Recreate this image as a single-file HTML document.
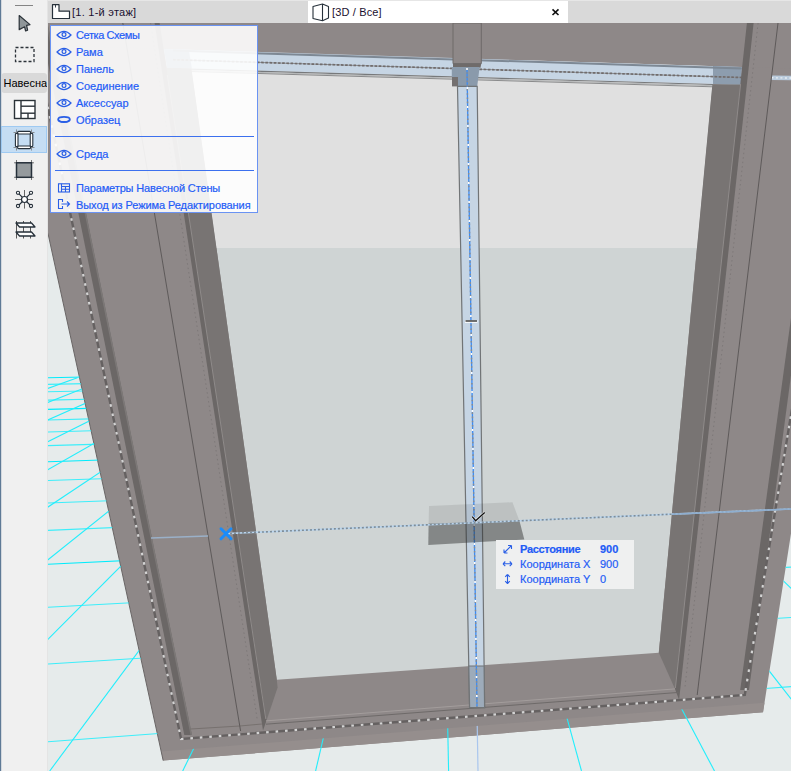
<!DOCTYPE html>
<html><head><meta charset="utf-8">
<style>
html,body{margin:0;padding:0;width:791px;height:771px;overflow:hidden;background:#f0f0f0;}
body{position:relative;font-family:"Liberation Sans",sans-serif;}
svg{position:absolute;left:0;top:0;}
.tab{position:absolute;font-size:11px;color:#1a1030;line-height:13px;white-space:nowrap;}
.menu{position:absolute;left:50px;top:25px;width:208px;height:188px;box-sizing:border-box;border:1px solid #6a93f3;background:rgba(255,255,255,0.89);}
.mi{position:absolute;left:25px;font-size:11px;color:#1f5cf6;-webkit-text-stroke:0.2px #1f5cf6;white-space:nowrap;line-height:13px;}
.sep{position:absolute;left:4px;width:199px;height:1px;background:#3c70ee;}
.tip{position:absolute;left:496px;top:540px;width:138px;height:49px;background:#eff0f0;}
.tr{position:absolute;font-size:11px;color:#1f5cf6;-webkit-text-stroke:0.2px #1f5cf6;white-space:nowrap;line-height:13px;}
</style></head><body>
<svg width="791" height="771" viewBox="0 0 791 771">
<rect x="48" y="23" width="743" height="748" fill="#e6ebeb"/>
<polygon points="48.0,23.0 791.0,23.0 791.0,533.4 763.0,712.3 163.2,760.6 48.0,233.5" fill="#8e8888"/>
<polygon points="161.2,751.5 764.5,702.7 763.0,712.3 163.2,760.6" fill="#958e8d"/>
<polygon points="190.2,60.0 714.7,60.0 658.8,652.8 276.8,679.8" fill="#cfd4d4"/>
<polygon points="190.2,60.0 714.7,60.0 697.0,248.0 216.4,248.0" fill="#e0e0e0"/>
<polygon points="48.0,23.0 791.0,23.0 791.0,68.6 48.0,45.3" fill="#8e8888"/>
<polygon points="163.8,48.9 741.8,67.0 740.8,84.7 167.1,67.9" fill="#c6d5e4"/>
<polygon points="163.8,48.9 188.8,49.7 191.9,68.6 167.1,67.9" fill="#8d9dae"/>
<polygon points="713.0,66.1 741.8,67.0 740.8,84.7 713.0,83.9" fill="#8d9dae"/>
<line x1="173" y1="50.6" x2="741.8" y2="68.4" stroke="#7d8894" stroke-width="2"/>
<line x1="173" y1="68.7" x2="712.9" y2="84.5" stroke="#77797b" stroke-width="1.2"/>
<line x1="173" y1="69.9" x2="712.9" y2="85.7" stroke="#b4b6b7" stroke-width="1"/>
<line x1="173" y1="71.0" x2="712.9" y2="86.8" stroke="#8a8b8c" stroke-width="1"/>
<line x1="173" y1="59.7" x2="741.8" y2="77.5" stroke="#8d9196" stroke-width="1"/>
<line x1="173" y1="59.7" x2="741.8" y2="77.5" stroke="#716c6c" stroke-width="1.7" stroke-dasharray="2.6 1.6"/>
<polygon points="771.7,75.5 791.0,75.8 791.0,80.2 771.2,80.0" fill="#b9cadb"/>
<line x1="771.4" y1="77.8" x2="791" y2="78" stroke="#e8eef4" stroke-width="1.4" stroke-dasharray="2 2.5"/>
<polygon points="166.5,68.0 191.4,68.7 276.8,679.8 277.6,687.4 266.7,720.0" fill="#787473"/>
<polygon points="154.6,23.0 159.6,23.0 266.7,720.0 263.0,730.6" fill="#6b6766"/>
<polygon points="712.4,84.5 740.3,84.5 675.0,689.0 658.8,652.8" fill="#787473"/>
<polygon points="746.9,23.0 753.6,23.0 679.1,700.0 675.0,689.0" fill="#6b6766"/>
<line x1="167.3" y1="75" x2="265.8" y2="719" stroke="#8f8b8a" stroke-width="1"/>
<line x1="740.6" y1="84" x2="675.4" y2="688" stroke="#8f8b8a" stroke-width="1"/>
<polygon points="39.8,23.0 47.4,23.0 191.9,735.0 184.3,735.0" fill="#6b6766"/>
<polygon points="800.3,250.0 807.7,250.0 749.0,690.0 740.2,690.0" fill="#6b6766"/>
<polyline points="48.0,233.5 163.2,760.6" fill="none" stroke="#6a6666" stroke-width="1"/>
<polyline points="46.8,23.0 191.3,735.0" fill="none" stroke="#7c7877" stroke-width="1.5"/>
<polyline points="190.7,729.0 239.8,726.0 261.9,724.0" fill="none" stroke="#77716f" stroke-width="1"/>
<line x1="758.1" y1="23" x2="684.9" y2="688" stroke="#7d7878" stroke-width="1" stroke-dasharray="1.5 3"/>
<line x1="150.6" y1="23" x2="257.3" y2="720" stroke="#7d7878" stroke-width="1" stroke-dasharray="1.5 3"/>
<line x1="122.8" y1="23" x2="240.6" y2="731" stroke="#5e5a5a" stroke-width="1"/>
<line x1="778.0" y1="23" x2="697.2" y2="695" stroke="#5e5a5a" stroke-width="1"/>
<line x1="266" y1="720.9" x2="675" y2="688.9" stroke="#a39d9c" stroke-width="1"/>
<line x1="266" y1="724.2" x2="680" y2="692.3" stroke="#6e6a69" stroke-width="1"/>
<polyline points="30.1,23.0 181.1,739.0 744.8,695.0 805.0,330.0" fill="none" stroke="#656161" stroke-width="2.4"/>
<polyline points="30.1,23.0 181.1,739.0 744.8,695.0 805.0,330.0" fill="none" stroke="#d4d4d4" stroke-width="2.2" stroke-dasharray="2.6 6.9"/>
<clipPath id="gclip"><polygon points="48.0,233.5 163.2,760.6 763.0,712.3 791.0,533.4 791.0,771.0 48.0,771.0"/><polygon points="161.2,751.5 764.5,702.7 763.0,712.3 163.2,760.6"/></clipPath>
<g clip-path="url(#gclip)"><line x1="47" y1="377.7" x2="791" y2="363.2" stroke="#00ecfc" stroke-width="1.1"/><line x1="47" y1="384.4" x2="791" y2="369.2" stroke="#3ceefa" stroke-width="1.1"/><line x1="47" y1="391.8" x2="791" y2="375.8" stroke="#3ceefa" stroke-width="1.1"/><line x1="47" y1="400.1" x2="791" y2="383.1" stroke="#3ceefa" stroke-width="1.1"/><line x1="47" y1="409.4" x2="791" y2="391.4" stroke="#00ecfc" stroke-width="1.1"/><line x1="47" y1="420.0" x2="791" y2="400.7" stroke="#3ceefa" stroke-width="1.1"/><line x1="47" y1="432.0" x2="791" y2="411.4" stroke="#3ceefa" stroke-width="1.1"/><line x1="47" y1="445.7" x2="791" y2="423.6" stroke="#3ceefa" stroke-width="1.1"/><line x1="47" y1="461.8" x2="791" y2="437.9" stroke="#00ecfc" stroke-width="1.1"/><line x1="47" y1="480.6" x2="791" y2="454.6" stroke="#3ceefa" stroke-width="1.1"/><line x1="47" y1="503.1" x2="791" y2="474.6" stroke="#3ceefa" stroke-width="1.1"/><line x1="47" y1="530.4" x2="791" y2="498.8" stroke="#3ceefa" stroke-width="1.1"/><line x1="47" y1="564.3" x2="791" y2="528.9" stroke="#00ecfc" stroke-width="1.1"/><line x1="47" y1="607.3" x2="791" y2="567.1" stroke="#3ceefa" stroke-width="1.1"/><line x1="47" y1="664.0" x2="791" y2="617.5" stroke="#3ceefa" stroke-width="1.1"/><line x1="47" y1="741.8" x2="791" y2="686.6" stroke="#3ceefa" stroke-width="1.1"/><line x1="47" y1="855.5" x2="791" y2="787.6" stroke="#00ecfc" stroke-width="1.1"/><line x1="44.4" y1="377.7" x2="-1146.9" y2="771" stroke="#22eefc" stroke-width="1.1"/><line x1="77.4" y1="377.7" x2="-1014.0" y2="771" stroke="#22eefc" stroke-width="1.1"/><line x1="110.4" y1="377.7" x2="-881.0" y2="771" stroke="#22eefc" stroke-width="1.1"/><line x1="143.5" y1="377.7" x2="-748.1" y2="771" stroke="#22eefc" stroke-width="1.1"/><line x1="176.5" y1="377.7" x2="-615.1" y2="771" stroke="#22eefc" stroke-width="1.1"/><line x1="209.5" y1="377.7" x2="-482.1" y2="771" stroke="#22eefc" stroke-width="1.1"/><line x1="242.5" y1="377.7" x2="-349.2" y2="771" stroke="#22eefc" stroke-width="1.1"/><line x1="275.5" y1="377.7" x2="-216.2" y2="771" stroke="#22eefc" stroke-width="1.1"/><line x1="308.6" y1="377.7" x2="-83.3" y2="771" stroke="#22eefc" stroke-width="1.1"/><line x1="341.6" y1="377.7" x2="49.7" y2="771" stroke="#22eefc" stroke-width="1.1"/><line x1="374.6" y1="377.7" x2="182.7" y2="771" stroke="#22eefc" stroke-width="1.1"/><line x1="407.6" y1="377.7" x2="315.6" y2="771" stroke="#22eefc" stroke-width="1.1"/><line x1="440.7" y1="377.7" x2="448.6" y2="771" stroke="#22eefc" stroke-width="1.1"/><line x1="473.7" y1="377.7" x2="581.5" y2="771" stroke="#22eefc" stroke-width="1.1"/><line x1="506.7" y1="377.7" x2="714.5" y2="771" stroke="#22eefc" stroke-width="1.1"/><line x1="539.7" y1="377.7" x2="847.5" y2="771" stroke="#22eefc" stroke-width="1.1"/><line x1="572.8" y1="377.7" x2="980.4" y2="771" stroke="#22eefc" stroke-width="1.1"/><line x1="605.8" y1="377.7" x2="1113.4" y2="771" stroke="#22eefc" stroke-width="1.1"/><line x1="638.8" y1="377.7" x2="1246.3" y2="771" stroke="#22eefc" stroke-width="1.1"/><line x1="671.8" y1="377.7" x2="1379.3" y2="771" stroke="#22eefc" stroke-width="1.1"/><line x1="704.9" y1="377.7" x2="1512.3" y2="771" stroke="#22eefc" stroke-width="1.1"/><line x1="737.9" y1="377.7" x2="1645.2" y2="771" stroke="#22eefc" stroke-width="1.1"/><line x1="770.9" y1="377.7" x2="1778.2" y2="771" stroke="#22eefc" stroke-width="1.1"/><line x1="477" y1="712" x2="478" y2="771" stroke="#a9c6ee" stroke-width="1.2"/></g>
<polygon points="453,23 481.3,23 481.3,63.6 453,63.6" fill="#8e8888" stroke="#6e6a69" stroke-width="1"/>
<polygon points="453,63.6 481.3,63.6 480.5,67.7 453,67.7" fill="#6f6b6a"/>
<polygon points="451.8,67 479.6,67 477.2,86.4 457.5,86.4 457.5,77 451.8,77" fill="#8a9aab"/>
<rect x="452" y="77" width="6" height="9.4" fill="#747070"/>
<polygon points="457.5,86.4 477.2,86.4 484.6,707.7 469.6,707.7" fill="#c6d5e4" stroke="#717476" stroke-width="1.2"/>
<polygon points="468.8,666.0 484.1,666.0 484.6,707.7 469.6,707.7" fill="#9dabba" stroke="#717476" stroke-width="1.2"/>
<line x1="467" y1="68" x2="477" y2="707" stroke="#3b8cf6" stroke-width="1.3"/>
<line x1="467" y1="68" x2="477" y2="707" stroke="#8c8c8c" stroke-width="1.4" stroke-dasharray="1.6 2.6"/>
<line x1="467" y1="68" x2="477" y2="707" stroke="#ffffff" stroke-width="1.6" stroke-dasharray="2 17"/>
<line x1="465" y1="321.5" x2="477.5" y2="321.5" stroke="#fff" stroke-width="2.6"/><line x1="465.5" y1="321" x2="477" y2="321" stroke="#111" stroke-width="1.2"/>
<polygon points="429,506 512.5,502.2 519.5,521 428.6,523.5" fill="#000" fill-opacity="0.085"/><polygon points="428.6,523.5 519.5,521 524.3,539.5 428.3,545" fill="#282a2a" fill-opacity="0.45"/>
<line x1="226" y1="533.6" x2="791" y2="509" stroke="#b8d4ee" stroke-width="1.6"/>
<line x1="226" y1="533.6" x2="791" y2="509" stroke="#7f8d98" stroke-width="1.6" stroke-dasharray="2 2"/>
<line x1="672.1" y1="514.2" x2="791" y2="509" stroke="#8eaed0" stroke-width="1.5"/>
<line x1="151" y1="538" x2="208" y2="536" stroke="#9ab0c8" stroke-width="1.5"/>
<path d="M221,528.8 L231,538.8 M231,528.8 L221,538.8" stroke="#1a8cfa" stroke-width="3" stroke-linecap="round"/>
<polyline points="472.2,516.6 475.6,520.7 484.7,512.4" fill="none" stroke="#fff" stroke-width="2.6" stroke-opacity="0.7"/>
<polyline points="472.2,516.6 475.6,520.7 484.7,512.4" fill="none" stroke="#111" stroke-width="1.3"/>
</svg>
<!-- toolbar -->
<svg width="48" height="771" viewBox="0 0 48 771">
  <rect x="0" y="0" width="48" height="771" fill="#f0f0f0"/>
  <rect x="0" y="0" width="1.2" height="771" fill="#5f7a96"/>
  <rect x="47" y="0" width="1" height="771" fill="#e4e4e4"/>
  <line x1="15" y1="5.5" x2="33" y2="5.5" stroke="#858585" stroke-width="1"/>
  <path d="M19.2,15.5 L30,24.6 L26.6,25.4 L27.6,30.2 L25.6,31 L24.6,26.8 L19.2,29.6 Z" fill="#8f9699" stroke="#2b3238" stroke-width="1.2" stroke-linejoin="round"/>
  <rect x="15.5" y="47.5" width="18.5" height="14" fill="none" stroke="#2b3238" stroke-width="1.3" stroke-dasharray="3 2"/>
  <rect x="1.5" y="73" width="45.5" height="20" rx="3" fill="#d9d9d9"/>
  <rect x="14.5" y="100.5" width="20.5" height="18" fill="#fff" stroke="#2b3238" stroke-width="1.4"/>
  <line x1="21" y1="100.5" x2="21" y2="118.5" stroke="#2b3238" stroke-width="1.4"/>
  <line x1="21" y1="106.2" x2="35" y2="106.2" stroke="#2b3238" stroke-width="1.4"/>
  <line x1="21" y1="113.2" x2="35" y2="113.2" stroke="#2b3238" stroke-width="1.4"/>
  <line x1="28" y1="113.2" x2="28" y2="118.5" stroke="#2b3238" stroke-width="1.4"/>
  <rect x="1.5" y="126.5" width="45" height="26" fill="#c5ddf3" stroke="#9fcaf2" stroke-width="1"/>
  <path d="M13.5,132.5 h3 M31.5,132.5 h3 M13.5,147.5 h3 M31.5,147.5 h3 M16.5,129.5 v3 M31.5,129.5 v3 M16.5,147.5 v3 M31.5,147.5 v3" stroke="#777" stroke-width="0.8"/>
  <g fill="#fff" stroke="#26303a" stroke-width="1.1">
  <rect x="17.6" y="131.4" width="13" height="2.6" rx="1"/>
  <rect x="17.6" y="146" width="13" height="2.6" rx="1"/>
  <rect x="15.4" y="133.4" width="2.6" height="13.2" rx="1"/>
  <rect x="30.2" y="133.4" width="2.6" height="13.2" rx="1"/>
  </g>
  <path d="M14,162.8 h20 M14,177.3 h20 M16.5,160 v20 M31.5,160 v20" stroke="#555" stroke-width="0.8"/>
  <rect x="16.5" y="162.8" width="15" height="14.5" fill="#959a9d" stroke="#26303a" stroke-width="1.5"/>
  <path d="M15,199.5 h18 M24.5,190 v18.6" stroke="#555" stroke-width="0.9"/>
  <path d="M18,192.8 L31,206 M31,192.8 L18,206" stroke="#26303a" stroke-width="1.2"/>
  <circle cx="24.5" cy="199.5" r="3" fill="#fff" stroke="#26303a" stroke-width="1.2"/>
  <circle cx="18" cy="192.8" r="1.6" fill="#fff" stroke="#26303a" stroke-width="1.1"/>
  <circle cx="31" cy="192.8" r="1.6" fill="#fff" stroke="#26303a" stroke-width="1.1"/>
  <circle cx="18" cy="206" r="1.6" fill="#fff" stroke="#26303a" stroke-width="1.1"/>
  <circle cx="31" cy="206" r="1.6" fill="#fff" stroke="#26303a" stroke-width="1.1"/>
  <path d="M16.5,221 v17.5 M23.5,221 v17.5 M30.5,221 v17.5" stroke="#444" stroke-width="0.9"/>
  <path d="M16,223 L31.5,223 L35,227 L19.5,227 Z M16,232 L31.5,232 L35,236 L19.5,236 Z" fill="#fff" stroke="#26303a" stroke-width="1.3" stroke-linejoin="round"/>
</svg>
<div class="tab" style="left:3.5px;top:77px;width:43.5px;overflow:hidden;font-size:11px;color:#000;">Навесна</div>
<!-- tabs -->
<svg width="791" height="23" viewBox="0 0 791 23" style="left:0;top:0">
  <rect x="48" y="0" width="743" height="23" fill="#d9d9d9"/>
  <rect x="48" y="0" width="743" height="1" fill="#e6e6e6"/>
  <rect x="308" y="1" width="260" height="22" fill="#fff"/>
  <path d="M52.5,4.7 h6.5 v6.5 h10.5 v7.3 h-17 Z" fill="#fff" stroke="#26303a" stroke-width="1.2" stroke-linejoin="round"/>
  <path d="M55.5,5 v2.5" stroke="#26303a" stroke-width="0.9"/>
  <path d="M313,6.5 L322.5,4 L328.5,6.5 L328.5,18 L322.5,20.8 L313,18.5 Z M322.5,4 L322.5,20.8" fill="#fff" stroke="#26303a" stroke-width="1.1" stroke-linejoin="round"/>
  <path d="M552.5,9.3 L558.5,15 M558.5,9.3 L552.5,15" stroke="#111" stroke-width="1.6"/>
</svg>
<div class="tab" style="left:72px;top:6px;letter-spacing:0.25px;">[1. 1-й этаж]</div>
<div class="tab" style="left:332px;top:6px;letter-spacing:0.15px;">[3D / Все]</div>
<div class="menu">
  <div class="mi" style="top:2.7px;letter-spacing:-0.4px">Сетка Схемы</div>
  <div class="mi" style="top:19.7px">Рама</div>
  <div class="mi" style="top:36.7px">Панель</div>
  <div class="mi" style="top:53.7px">Соединение</div>
  <div class="mi" style="top:70.7px">Аксессуар</div>
  <div class="mi" style="top:87.7px">Образец</div>
  <div class="sep" style="top:110px"></div>
  <div class="mi" style="top:121.7px">Среда</div>
  <div class="sep" style="top:144px"></div>
  <div class="mi" style="top:155.7px;letter-spacing:-0.14px">Параметры Навесной Стены</div>
  <div class="mi" style="top:172.7px;letter-spacing:-0.08px">Выход из Режима Редактирования</div>
</div>
<svg width="791" height="771" viewBox="0 0 791 771" style="pointer-events:none">
  <g fill="none" stroke="#2a5fe6" stroke-width="1.2">
    <g id="eye"><path d="M57,35 Q64,27.8 71,35 Q64,42.2 57,35 Z"/><circle cx="64" cy="34.6" r="1.9"/></g>
    <use href="#eye" y="17"/><use href="#eye" y="34"/><use href="#eye" y="51"/><use href="#eye" y="68"/>
    <use href="#eye" y="119"/>
  </g>
  <ellipse cx="64" cy="119.4" rx="5.8" ry="2.5" fill="none" stroke="#2a5fe6" stroke-width="1.9"/>
  <path d="M58.5,120.2 Q64,124.4 69.5,120.2" fill="none" stroke="#2a5fe6" stroke-width="1.3"/>
  <g fill="none" stroke="#2a5fe6" stroke-width="1.1">
    <rect x="58.5" y="183.8" width="11" height="8.2"/>
    <path d="M61.5,183.8 v8.2 M61.5,186.5 h8 M61.5,189.3 h8 M65.5,186.5 v5.5"/>
    <path d="M62.5,202 v-2.5 h-4 v9 h4 v-2.5 M61.5,204 h8 M67,201.5 l2.5,2.5 l-2.5,2.5"/>
  </g>
</svg>
<div class="tip">
  <div class="tr" style="left:24px;top:3px;font-weight:bold;letter-spacing:-0.3px">Расстояние</div>
  <div class="tr" style="left:104px;top:3px;font-weight:bold">900</div>
  <div class="tr" style="left:24px;top:18px">Координата X</div>
  <div class="tr" style="left:104px;top:18px">900</div>
  <div class="tr" style="left:24px;top:33px">Координата Y</div>
  <div class="tr" style="left:104px;top:33px">0</div>
</div>
<svg width="791" height="771" viewBox="0 0 791 771" style="pointer-events:none">
  <g fill="none" stroke="#2a5fe6" stroke-width="1.1">
    <path d="M504,553 L511.5,545.5 M504,553 v-3.5 M504,553 h3.5 M511.5,545.5 v3.5 M511.5,545.5 h-3.5"/>
    <path d="M503,563.8 h9 M503,563.8 l2.3,-2.3 M503,563.8 l2.3,2.3 M512,563.8 l-2.3,-2.3 M512,563.8 l-2.3,2.3"/>
    <path d="M507.5,574.5 v9 M507.5,574.5 l-2.3,2.3 M507.5,574.5 l2.3,2.3 M507.5,583.5 l-2.3,-2.3 M507.5,583.5 l2.3,-2.3"/>
  </g>
</svg>
</body></html>
